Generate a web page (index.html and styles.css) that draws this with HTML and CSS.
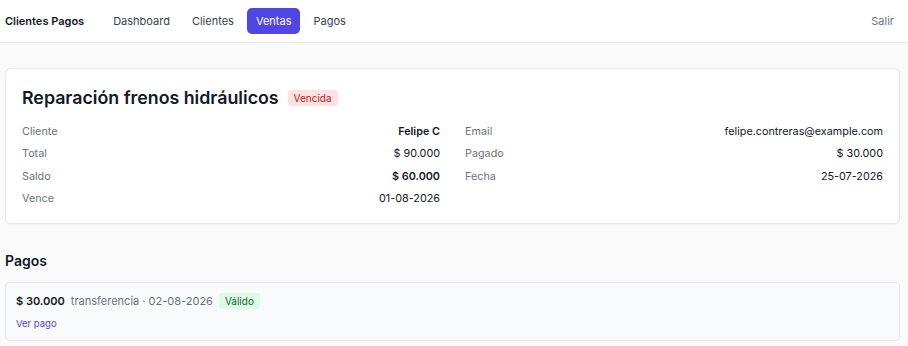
FILE: index.html
```html
<!DOCTYPE html>
<html lang="es">
<head>
    <meta charset="UTF-8">
    <meta name="viewport" content="width=device-width, initial-scale=1.0">
    <title>Venta - Clientes Pagos</title>
    <link rel="stylesheet" href="styles.css">
</head>
<body>
    <nav class="topbar">
        <div class="nav-left">
            <span class="brand">Clientes Pagos</span>
            <div class="nav-links">
                <a href="#" class="nav-link">Dashboard</a>
                <a href="#" class="nav-link">Clientes</a>
                <a href="#" class="nav-link active">Ventas</a>
                <a href="#" class="nav-link">Pagos</a>
            </div>
        </div>
        <a href="#" class="logout">Salir</a>
    </nav>

    <main class="page">
        <section class="card">
            <div class="card-head">
                <h1>Reparación frenos hidráulicos</h1>
                <span class="badge badge-red">Vencida</span>
            </div>
            <div class="details">
                <div class="col">
                    <div class="row"><span class="label">Cliente</span><span class="value strong">Felipe C</span></div>
                    <div class="row"><span class="label">Total</span><span class="value">$ 90.000</span></div>
                    <div class="row"><span class="label">Saldo</span><span class="value strong">$ 60.000</span></div>
                    <div class="row"><span class="label">Vence</span><span class="value">01-08-2026</span></div>
                </div>
                <div class="col">
                    <div class="row"><span class="label">Email</span><span class="value">felipe.contreras@example.com</span></div>
                    <div class="row"><span class="label">Pagado</span><span class="value">$ 30.000</span></div>
                    <div class="row"><span class="label">Fecha</span><span class="value">25-07-2026</span></div>
                </div>
            </div>
        </section>

        <h2 class="section-title">Pagos</h2>
        <div class="payment">
            <div class="payment-line">
                <span class="amount">$ 30.000</span>
                <span class="meta">transferencia · 02-08-2026</span>
                <span class="badge badge-green">Válido</span>
            </div>
            <a href="#" class="payment-link">Ver pago</a>
        </div>
    </main>
</body>
</html>
```

FILE: styles.css
```css
* {
    box-sizing: border-box;
}
body {
    margin: 0;
    font-family: 'Inter', 'Noto Sans', sans-serif;
    background-color: #fafafa;
    color: #111827;
}
a {
    text-decoration: none;
}
.topbar {
    height: 43px;
    background-color: #ffffff;
    border-bottom: 1px solid #e5e7eb;
    display: flex;
    align-items: center;
    justify-content: space-between;
    padding: 0 14px 0 5px;
}
.nav-left {
    display: flex;
    align-items: center;
}
.brand {
    font-size: 11px;
    font-weight: 600;
    margin-right: 20px;
}
.nav-links {
    display: flex;
    gap: 4px;
}
.nav-link {
    font-size: 11px;
    line-height: 14px;
    color: #374151;
    padding: 6px 9px;
    border-radius: 5px;
}
.nav-link.active {
    background-color: #4f46e5;
    color: #ffffff;
}
.logout {
    font-size: 11px;
    color: #6b7280;
}
.page {
    padding: 25px 8px 0 5px;
}
.card {
    background-color: #ffffff;
    border: 1px solid #e5e7eb;
    border-radius: 6px;
    padding: 17px 16px 13px 16px;
    box-shadow: 0 1px 2px rgba(0, 0, 0, 0.04);
}
.card-head {
    display: flex;
    align-items: center;
    gap: 9px;
    margin-bottom: 11px;
}
.card-head h1 {
    margin: 0;
    font-size: 17.8px;
    font-weight: 600;
    line-height: 24px;
}
.badge {
    font-size: 10px;
    line-height: 12px;
    padding: 2px 6px;
    border-radius: 3px;
}
.badge-red {
    background-color: #fee2e2;
    color: #b91c1c;
}
.badge-green {
    background-color: #dcfce7;
    color: #166534;
}
.details {
    display: grid;
    grid-template-columns: 1fr 1fr;
    column-gap: 25px;
}
.row {
    display: flex;
    justify-content: space-between;
    font-size: 10.8px;
    line-height: 16.3px;
    padding: 3px 0;
}
.label {
    color: #6b7280;
}
.value {
    color: #111827;
}
.value.strong {
    font-weight: 600;
}
.section-title {
    font-size: 14px;
    font-weight: 600;
    margin: 28px 0 12px 0;
    line-height: 18px;
}
.payment {
    background-color: #f9fafb;
    border: 1px solid #e3e7f0;
    border-radius: 4px;
    padding: 10px 10px 9px 10px;
}
.payment-line {
    display: flex;
    align-items: center;
    gap: 6px;
    font-size: 11px;
    line-height: 16px;
}
.amount {
    font-weight: 600;
}
.meta {
    color: #6b7280;
}
.payment-link {
    display: inline-block;
    margin-top: 9px;
    font-size: 9.5px;
    line-height: 12px;
    color: #4f46e5;
}
```
